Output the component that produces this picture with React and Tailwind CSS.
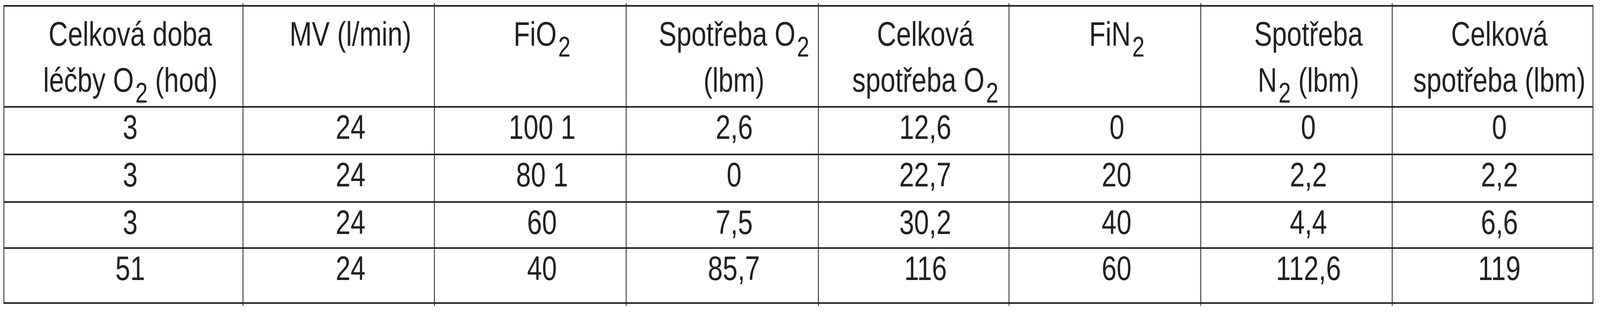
import { useState } from "react";

// column widths as share of the table, measured on the 5206px wide original
const cols = "grid grid-cols-[15.035%_12.074%_12.055%_12.113%_11.997%_12.094%_12.036%_12.596%]";

const Sub = ({ children }) => (
  <span className="relative top-[28px] ml-[5px] text-[72px] leading-none">{children}</span>
);

const header = [
  <>Celková doba<br />léčby O<Sub>2</Sub> (hod)</>,
  <>MV (l/min)</>,
  <>FiO<Sub>2</Sub></>,
  <>Spotřeba O<Sub>2</Sub><br />(lbm)</>,
  <>Celková<br />spotřeba O<Sub>2</Sub></>,
  <>FiN<Sub>2</Sub></>,
  <>Spotřeba<br />N<Sub>2</Sub> (lbm)</>,
  <>Celková<br />spotřeba (lbm)</>,
];

const rows = [
  { h: "h-[122px]", cells: ["3", "24", "100 1", "2,6", "12,6", "0", "0", "0"] },
  { h: "h-[122px]", cells: ["3", "24", "80 1", "0", "22,7", "20", "2,2", "2,2"] },
  { h: "h-[118px]", cells: ["3", "24", "60", "7,5", "30,2", "40", "4,4", "6,6"] },
  { h: "h-[141px]", cells: ["51", "24", "40", "85,7", "116", "60", "112,6", "119"] },
];

// first and last column sit less off-centre than the middle ones
const pad = (i) => (i === 0 || i === 7 ? "pl-[0.86vw]" : "pl-[1.48vw]");
const edge = (i) => (i < 7 ? "border-r-2 border-[#231f20]" : "");

function Ticks() {
  return (
    <div className={`${cols} h-[5px] px-[2px]`}>
      {header.map((_, i) => (
        <div key={i} className={edge(i)} />
      ))}
    </div>
  );
}

export default function App() {
  // the text was set for a 5206px wide page; squeeze it sideways to the real width
  const [k] = useState(() => Math.min(1, window.innerWidth / 5206));
  const squeeze = { transform: `scaleX(${k})` };

  return (
    <div className="min-h-screen bg-white pt-[8px] font-['Liberation_Sans',Arial,sans-serif] text-[87px] text-[#231f20]">
      <div className="ml-[0.23vw] w-[99.35vw]">
        <Ticks />
        <div className="border-x-2 border-t-4 border-[#231f20]">
          <div className={`${cols} h-[259px] border-b-4 border-[#231f20]`}>
            {header.map((c, i) => (
              <div key={i} className={`${edge(i)} ${pad(i)} flex justify-center pt-[11px] leading-[118px]`}>
                <div className="whitespace-nowrap text-center" style={squeeze}>
                  {c}
                </div>
              </div>
            ))}
          </div>
          {rows.map((r, ri) => (
            <div key={ri} className={`${cols} ${r.h} border-b-4 border-[#231f20]`}>
              {r.cells.map((c, i) => (
                <div key={i} className={`${edge(i)} ${pad(i)} flex justify-center leading-[100px]`}>
                  <div className="whitespace-nowrap" style={squeeze}>
                    {c}
                  </div>
                </div>
              ))}
            </div>
          ))}
        </div>
        <Ticks />
      </div>
    </div>
  );
}
